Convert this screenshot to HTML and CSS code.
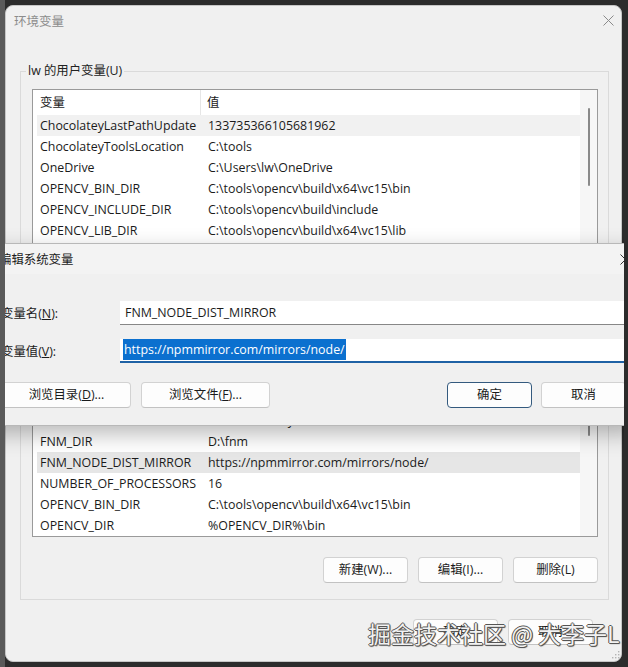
FILE: index.html
```html
<!DOCTYPE html>
<html lang="zh-CN">
<head>
<meta charset="utf-8">
<title>环境变量</title>
<link rel="stylesheet" href="styles.css">
</head>
<body>
<div class="frame">
  <div class="screen">
    <div class="window">
      <div class="titlebar">
        <span class="title">环境变量</span>
        <svg class="close" width="11" height="11" viewBox="0 0 11 11"><path d="M0.5 0.5 L10.5 10.5 M10.5 0.5 L0.5 10.5" stroke="#8a8a8a" stroke-width="1" fill="none"/></svg>
      </div>

      <fieldset class="group user">
        <legend>lw 的用户变量(U)</legend>
        <div class="list user-list">
          <div class="list-body">
            <div class="row head"><span class="c1">变量</span><span class="c2">值</span></div>
            <div class="row sel-light"><span class="c1">ChocolateyLastPathUpdate</span><span class="c2">133735366105681962</span></div>
            <div class="row"><span class="c1">ChocolateyToolsLocation</span><span class="c2">C:\tools</span></div>
            <div class="row"><span class="c1">OneDrive</span><span class="c2">C:\Users\lw\OneDrive</span></div>
            <div class="row"><span class="c1">OPENCV_BIN_DIR</span><span class="c2">C:\tools\opencv\build\x64\vc15\bin</span></div>
            <div class="row"><span class="c1">OPENCV_INCLUDE_DIR</span><span class="c2">C:\tools\opencv\build\include</span></div>
            <div class="row"><span class="c1">OPENCV_LIB_DIR</span><span class="c2">C:\tools\opencv\build\x64\vc15\lib</span></div>
            <div class="row"><span class="c1">Path</span><span class="c2">C:\Users\lw\AppData\Local\Microsoft\WindowsApps</span></div>
          </div>
          <div class="vscroll"><span class="thumb user-thumb"></span></div>
        </div>
        <div class="btns">
          <button class="btn">新建(N)...</button>
          <button class="btn">编辑(E)...</button>
          <button class="btn">删除(D)</button>
        </div>
      </fieldset>

      <fieldset class="group sys">
        <legend>系统变量(S)</legend>
        <div class="list sys-list">
          <div class="list-body">
            <div class="row head"><span class="c1">变量</span><span class="c2">值</span></div>
            <div class="row"><span class="c1">ChocolateyInstall</span><span class="c2">C:\ProgramData\chocolatey</span></div>
            <div class="row"><span class="c1">ComSpec</span><span class="c2">C:\WINDOWS\system32\cmd.exe</span></div>
            <div class="row"><span class="c1">DriverData</span><span class="c2">C:\Windows\System32\Drivers\DriverData</span></div>
            <div class="row"><span class="c1">FNM_DIR</span><span class="c2">D:\fnm</span></div>
            <div class="row sel-gray"><span class="c1">FNM_NODE_DIST_MIRROR</span><span class="c2">https://npmmirror.com/mirrors/node/</span></div>
            <div class="row"><span class="c1">NUMBER_OF_PROCESSORS</span><span class="c2">16</span></div>
            <div class="row"><span class="c1">OPENCV_BIN_DIR</span><span class="c2">C:\tools\opencv\build\x64\vc15\bin</span></div>
            <div class="row"><span class="c1">OPENCV_DIR</span><span class="c2">%OPENCV_DIR%\bin</span></div>
          </div>
          <div class="vscroll"><span class="thumb sys-thumb"></span></div>
        </div>
        <div class="btns sys-btns">
          <button class="btn">新建(W)...</button>
          <button class="btn">编辑(I)...</button>
          <button class="btn">删除(L)</button>
        </div>
      </fieldset>

      <div class="footer">
        <button class="btn">确定</button>
        <button class="btn">取消</button>
      </div>

      <svg class="grip" width="9" height="9" viewBox="0 0 9 9">
        <rect x="7" y="1" width="1.4" height="1.4" fill="#b4b4b4"/>
        <rect x="4" y="4" width="1.4" height="1.4" fill="#b4b4b4"/>
        <rect x="7" y="4" width="1.4" height="1.4" fill="#b4b4b4"/>
        <rect x="1" y="7" width="1.4" height="1.4" fill="#b4b4b4"/>
        <rect x="4" y="7" width="1.4" height="1.4" fill="#b4b4b4"/>
        <rect x="7" y="7" width="1.4" height="1.4" fill="#b4b4b4"/>
      </svg>
    </div>

    <div class="dialog">
      <div class="d-titlebar">
        <span class="d-title">编辑系统变量</span>
        <svg class="close" width="11" height="11" viewBox="0 0 11 11"><path d="M0.5 0.5 L10.5 10.5 M10.5 0.5 L0.5 10.5" stroke="#333" stroke-width="1" fill="none"/></svg>
      </div>
      <div class="d-body">
        <div class="field">
          <span class="label">变量名(<u>N</u>):</span>
          <div class="edit">FNM_NODE_DIST_MIRROR</div>
        </div>
        <div class="field field2">
          <span class="label">变量值(<u>V</u>):</span>
          <div class="edit focused"><span class="selection">https://npmmirror.com/mirrors/node/</span></div>
        </div>
        <div class="d-btns">
          <div class="d-left">
            <button class="btn wide">浏览目录(<u>D</u>)...</button>
            <button class="btn wide">浏览文件(<u>F</u>)...</button>
          </div>
          <div class="d-right">
            <button class="btn default">确定</button>
            <button class="btn">取消</button>
          </div>
        </div>
      </div>
    </div>

    <div class="watermark">掘金技术社区 @ 大李子L</div>
  </div>
</div>
</body>
</html>
```

FILE: styles.css
```css
html, body {
  margin: 0;
  padding: 0;
  background: #2c2c2c;
}

body {
  width: 628px;
  height: 667px;
  overflow: hidden;
  font-family: "Open Sans", "Noto Sans CJK SC", sans-serif;
  font-size: 12.4px;
  color: #1b1b1b;
}

.frame {
  width: 628px;
  height: 667px;
  box-sizing: border-box;
  padding: 5px 0 0 5px;
  background: linear-gradient(to right, #5a5a5a 0, #5a5a5a 5px, #2c2c2c 5px);
}

.screen {
  position: relative;
  width: 619px;
  height: 657px;
  overflow: hidden;
}

.window {
  position: relative;
  width: 617px;
  height: 657px;
  box-sizing: border-box;
  border: 1px solid #c6c6c6;
  border-radius: 8px;
  background: #f0f0f0;
  display: flex;
  flex-direction: column;
}

.titlebar {
  height: 28px;
  display: flex;
  align-items: center;
  justify-content: space-between;
  padding: 0 7px 0 8px;
}

.title {
  color: #8c8c8c;
  font-size: 12.5px;
}

.group {
  margin: 29px 12px 0 14px;
  padding: 10px 10px 10px 11px;
  border: 1px solid #dadada;
  min-width: 0;
}

.group legend {
  padding: 0 2px;
  margin-left: -6px;
  line-height: 16px;
  color: #222;
}

.group.sys {
  margin-top: 4px;
  padding-bottom: 16px;
}

.list {
  display: flex;
  border: 1px solid #9a9a9a;
  background: #ffffff;
}

.list-body {
  flex: 1;
  padding-left: 4px;
  min-width: 0;
}

.row {
  display: flex;
  height: 21px;
  line-height: 21px;
  white-space: nowrap;
  overflow: hidden;
}

.row.head {
  height: 25px;
  line-height: 25px;
}

.c1 {
  width: 164px;
  flex: none;
  box-sizing: border-box;
  padding-left: 3px;
}

.c2 {
  padding-left: 7px;
}

.row.head .c1 {
  border-right: 1px solid #e6e6e6;
}

.row.head .c2 {
  padding-left: 6px;
}

.sel-light {
  background: #f1f1f1;
}

.sel-gray {
  background: #e6e6e6;
}

.vscroll {
  width: 17px;
  flex: none;
  background: #f6f6f6;
  display: flex;
  flex-direction: column;
  align-items: center;
}

.thumb {
  width: 2px;
  border-radius: 1px;
  background: #8a8a8a;
}

.user-thumb {
  margin-top: 18px;
  height: 78px;
}

.sys-thumb {
  margin-top: 18px;
  height: 75px;
}

.btns {
  display: flex;
  justify-content: flex-end;
  gap: 10px;
  margin-top: 12px;
}

.sys-btns {
  margin-top: 20px;
}

.btn {
  width: 85px;
  height: 26px;
  box-sizing: border-box;
  border: 1px solid #d2d2d2;
  border-bottom-color: #c2c2c2;
  border-radius: 4px;
  background: #fdfdfd;
  font-family: "Open Sans", "Noto Sans CJK SC", sans-serif;
  font-size: 12.4px;
  color: #1b1b1b;
  padding: 0;
  line-height: 24px;
}

.footer {
  display: flex;
  justify-content: flex-end;
  gap: 10px;
  margin-top: 19px;
  padding-right: 28px;
}

.grip {
  position: absolute;
  right: 1px;
  bottom: 2px;
}

/* Edit dialog overlay */
.dialog {
  position: absolute;
  left: -23px;
  top: 238px;
  width: 657px;
  height: 183px;
  box-sizing: border-box;
  border: 1px solid #b8b8b8;
  border-radius: 8px;
  background: #f0f0f0;
  box-shadow: 0 8px 22px rgba(0, 0, 0, 0.28);
  display: flex;
  flex-direction: column;
}

.d-titlebar {
  height: 30px;
  display: flex;
  align-items: center;
  justify-content: space-between;
  padding: 0 7px 0 16px;
  background: #f3f3f3;
  border-radius: 8px 8px 0 0;
}

.d-body {
  display: flex;
  flex-direction: column;
  padding: 27px 11px 0 10px;
}

.field {
  display: flex;
  align-items: center;
  height: 24px;
}

.field2 {
  margin-top: 14px;
}

.label {
  width: 127px;
  flex: none;
  box-sizing: border-box;
  padding-left: 8px;
}

.edit {
  flex: 1;
  height: 24px;
  box-sizing: border-box;
  background: #ffffff;
  border-bottom: 1px solid #878787;
  padding-left: 5px;
  line-height: 23px;
  white-space: nowrap;
}

.edit.focused {
  border-bottom: 2px solid #1f62a5;
  padding-left: 3px;
  line-height: 22px;
}

.selection {
  background: #0b70cf;
  color: #ffffff;
  padding: 2px 1px 2px 1px;
}

.d-btns {
  display: flex;
  justify-content: space-between;
  margin-top: 19px;
  padding-left: 9px;
  padding-right: 1px;
}

.d-left, .d-right {
  display: flex;
  gap: 10px;
}

.d-right {
  gap: 9px;
}

.btn.wide {
  width: 129px;
}

.btn.default {
  border: 1px solid #345a7e;
}

.watermark {
  position: absolute;
  left: 363px;
  top: 613px;
  font-family: "Noto Sans CJK SC", sans-serif;
  font-size: 23px;
  line-height: 30px;
  color: #f2f2f2;
  white-space: nowrap;
  text-shadow: 1px 0 0 #555, -1px 0 0 #555, 0 1px 0 #555, 0 -1px 0 #555, 1px 1px 1px #444;
}
```
